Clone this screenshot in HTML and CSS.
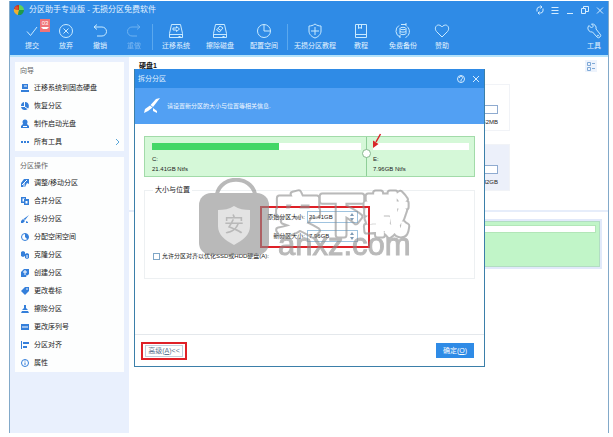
FILE: index.html
```html
<!DOCTYPE html>
<html lang="zh-CN">
<head>
    <meta charset="UTF-8">
    <meta name="viewport" content="width=device-width, initial-scale=1.0">
    <title>分区助手专业版 - 无损分区免费软件</title>
    <link rel="stylesheet" href="styles.css">
</head>
<body>
    <div class="app">
        <header class="titlebar">
            <svg class="logo" viewBox="0 0 12 12">
                <path d="M6 6V1A5 5 0 0 0 1 5.500Z" fill="#c8321e"/>
                <path d="M6 6L1 5A5 5 0 0 0 5 11Z" fill="#f0b030"/>
                <path d="M6 1a5 5 0 0 1 5 5L6 6.500Z" fill="#5fd35a"/>
                <path d="M11 6a5 5 0 0 1-6 5l1-5Z" fill="#1f9a4a"/>
                <circle cx="3.500" cy="4" r="1.800" fill="#e2502c"/>
            </svg>
            <h1>分区助手专业版 - 无损分区免费软件</h1>
            <div class="window-controls">
                <button aria-label="刷新"><svg viewBox="0 0 10 10"><path d="M2 6.500V4a2.500 2.500 0 0 1 2.500-2H7M5.500.500 7 2 5.500 3.500M8 3.500V6a2.500 2.500 0 0 1-2.500 2H3M4.500 6.500 3 8l1.500 1.500"/></svg></button>
                <button aria-label="菜单"><svg viewBox="0 0 10 10"><path d="M1.500 2.500h7M1.500 5.500h7M1.500 8.500h7"/></svg></button>
                <button aria-label="最小化"><svg viewBox="0 0 10 10"><path d="M2 8.500h6"/></svg></button>
                <button aria-label="还原"><svg viewBox="0 0 10 10"><path d="M1.500 3.500h4v5h-4zM3.500 3.500v-2h5v5h-3"/></svg></button>
                <button aria-label="关闭"><svg viewBox="0 0 10 10"><path d="M2 2.500l6 6M8 2.500l-6 6"/></svg></button>
            </div>
        </header>

        <nav class="toolbar">
            <button class="tool">
                <svg viewBox="0 0 16 16"><path d="M3 8.500l3.500 4L13 4"/></svg>
                <span>提交</span>
                <span class="badge">03</span>
            </button>
            <button class="tool">
                <svg viewBox="0 0 16 16"><circle cx="8" cy="8" r="6.500"/><path d="M5.500 5.500l5 5M10.500 5.500l-5 5"/></svg>
                <span>放弃</span>
            </button>
            <button class="tool">
                <svg viewBox="0 0 16 16"><path d="M5 1.500L2 4l3 2.500M2 4h8a4.500 4.500 0 0 1 0 9H5"/></svg>
                <span>撤销</span>
            </button>
            <button class="tool dim" disabled>
                <svg viewBox="0 0 16 16"><path d="M11 1.500L14 4l-3 2.500M14 4H6a4.500 4.500 0 0 0 0 9h5"/></svg>
                <span>重做</span>
            </button>
            <span class="divider"></span>
            <button class="tool wide">
                <svg viewBox="0 0 16 16"><path d="M3.500 1.500h9l2 9v4h-13v-4zM1.500 11.500h13M10.500 13.500h2M5 5h3.500V3.500L11.500 6 8.500 8.500V7H5z"/></svg>
                <span>迁移系统</span>
            </button>
            <button class="tool wide">
                <svg viewBox="0 0 16 16"><path d="M3.500 1.500h9l2 9v4h-13v-4zM1.500 11.500h13M10.500 13.500h2M8 3l3 2-3.500 4-3-2zM6 5.500l3 2"/></svg>
                <span>擦除磁盘</span>
            </button>
            <button class="tool wide">
                <svg viewBox="0 0 16 16"><circle cx="8" cy="8" r="6.500"/><path d="M8 1.500V8h6.500"/></svg>
                <span>配置空间</span>
            </button>
            <span class="divider"></span>
            <button class="tool wider">
                <svg viewBox="0 0 16 16"><path d="M8 1c2 1.500 4 2 6 2v5c0 3.500-3 6-6 7-3-1-6-3.500-6-7V3c2 0 4-.500 6-2zM8 4v8M4 8h8"/></svg>
                <span>无损分区教程</span>
            </button>
            <button class="tool medium">
                <svg viewBox="0 0 16 16"><path d="M2.500 1.500h11v13h-11zM2.500 11.500h11M5.500 1.500v4L7 4.500l1.500 1v-4"/></svg>
                <span>教程</span>
            </button>
            <button class="tool wide">
                <svg viewBox="0 0 16 16"><path d="M4 2.500a6.500 6.500 0 0 0 1 11.500M6 1.500h5M12 3.500a6.500 6.500 0 0 1-1.500 11M11 0v3M5 12v3"/><ellipse cx="8" cy="5.500" rx="3" ry="1.200"/><path d="M5 5.500v5c0 1.500 6 1.500 6 0v-5M5 8c0 1.500 6 1.500 6 0"/></svg>
                <span>免费备份</span>
            </button>
            <button class="tool">
                <svg viewBox="0 0 16 16"><path d="M8 14L2.500 8.500C0 5.500 2 2 4.500 2 6.500 2 8 4 8 4s1.500-2 3.500-2C14 2 16 5.500 13.500 8.500z"/></svg>
                <span>赞助</span>
            </button>
            <button class="tool tool-last">
                <svg viewBox="0 0 16 16"><path d="M3 2.500l2.500 2.500 2-2L5.500 1A4 4 0 0 1 10 6l4 5a2 2 0 0 1-3 3L6.500 9A4 4 0 0 1 2 4z"/><circle cx="12" cy="12.500" r=".5"/></svg>
                <span>工具</span>
            </button>
        </nav>

        <div class="workspace">
            <aside class="sidebar">
                <section class="panel">
                    <h2>向导</h2>
                    <ul>
                        <li><a href="#"><svg viewBox="0 0 10 10"><path d="M2 1h6v5H2zM1 7h8v2H1z"/><path d="M4 3h3" stroke="#fff"/></svg>迁移系统到固态硬盘</a></li>
                        <li><a href="#"><svg viewBox="0 0 10 10"><path d="M5 1a4 4 0 1 1-4 5h4zM4 1v4H1a4 4 0 0 1 3-4z"/><path d="M5 6l3 2" stroke="#fff"/></svg>恢复分区</a></li>
                        <li><a href="#"><svg viewBox="0 0 10 10"><circle cx="5" cy="3" r="2.500"/><path d="M3 5h4l2 2v2H1V7z"/><path d="M3 7.500h4" stroke="#fff"/></svg>制作启动光盘</a></li>
                        <li><a href="#"><svg viewBox="0 0 10 10"><path d="M1 4h2v2H1zM4 4h2v2H4zM7 4h2v2H7z"/></svg>所有工具<svg class="chevron" viewBox="0 0 6 8"><path d="M2 1l3 3-3 3"/></svg></a></li>
                    </ul>
                </section>
                <section class="panel">
                    <h2>分区操作</h2>
                    <ul>
                        <li><a href="#"><svg viewBox="0 0 10 10"><path d="M4 1h5v5L7 5 5 9H1V5z"/><path d="M2 7l5-5M4 9V5" stroke="#fff"/></svg>调整/移动分区</a></li>
                        <li><a href="#"><svg viewBox="0 0 10 10"><path d="M1 1h5v2h3v6H4V7H1zM2.500 2.500v3H4V3h1v-.500zM5.500 5v2.500h2V5z" fill-rule="evenodd"/></svg>合并分区</a></li>
                        <li><a href="#"><svg viewBox="0 0 10 10"><path d="M9 1L5 6 3.500 5zM3 5l2 2-2 2H1V7zM6 7l2 1v1H6z"/></svg>拆分分区</a></li>
                        <li><a href="#"><svg viewBox="0 0 10 10"><circle cx="5" cy="5" r="3.500" fill="none" stroke="#347fda"/><path d="M5 1.500V5l2.500 2.500A3.500 3.500 0 0 0 5 1.500z"/></svg>分配空闲空间</a></li>
                        <li><a href="#"><svg viewBox="0 0 10 10"><path d="M1 2l2-1 2 1v4L3 7 1 6z"/><path d="M5 4l2-1 2 1v4L7 9 5 8z"/><path d="M7 5v3" stroke="#fff"/></svg>克隆分区</a></li>
                        <li><a href="#"><svg viewBox="0 0 10 10"><path d="M4 1h5v5L6 9H1V4z"/><path d="M3 4h4M5 2v5M7 7v2" stroke="#fff"/></svg>创建分区</a></li>
                        <li><a href="#"><svg viewBox="0 0 10 10"><path d="M5 1h4v4L5 9 1 5z"/><circle cx="7" cy="3" r=".8" fill="#fff"/></svg>更改卷标</a></li>
                        <li><a href="#"><svg viewBox="0 0 10 10"><path d="M4 1h2v3l2 2H2l2-2zM2 7h6l1 2H1z"/></svg>擦除分区</a></li>
                        <li><a href="#"><svg viewBox="0 0 10 10"><path d="M1 2h8v6H1z"/><path d="M3 4v2M5 4v2M7 4v2" stroke="#fff"/></svg>更改序列号</a></li>
                        <li><a href="#"><svg viewBox="0 0 10 10"><path d="M1 1h1v8H1zM3 2h6v2H3zM3 6h4v2H3z"/></svg>分区对齐</a></li>
                        <li><a href="#"><svg viewBox="0 0 10 10"><circle cx="5" cy="5" r="3.500" fill="none" stroke="#347fda"/><path d="M4.500 4.500h1V7h-1zM4.500 2.500h1v1h-1z"/></svg>属性</a></li>
                    </ul>
                </section>
            </aside>

            <main class="disks">
                <div class="disk-list">
                    <div class="disk-head">
                        <h2>硬盘1</h2>
                        <button class="view-toggle" aria-label="视图"><svg viewBox="0 0 12 12"><path d="M2.500 2.500h3v3h-3zM2.500 7.500h3v3h-3zM7 3.500h3M7 8.500h3"/></svg></button>
                    </div>
                    <div class="volume">
                        <div class="volume-bar"></div>
                        <span>62MB</span>
                    </div>
                    <div class="volume selected">
                        <div class="volume-bar"></div>
                        <span>82GB</span>
                    </div>
                </div>
                <div class="disk-map">
                    <div class="map-block"><div class="map-bar"></div></div>
                </div>
            </main>
        </div>

        <div class="dialog" role="dialog" aria-labelledby="dialog-title">
            <div class="dialog-title">
                <h2 id="dialog-title">拆分分区</h2>
                <button aria-label="帮助"><svg viewBox="0 0 10 10"><circle cx="5" cy="5" r="3.500"/><path d="M3.500 4a1.500 1.500 0 1 1 2 1.200L5 6v1.500"/></svg></button>
                <button aria-label="关闭"><svg viewBox="0 0 10 10"><path d="M2 2l6 6M8 2L2 8"/></svg></button>
            </div>
            <div class="banner">
                <svg viewBox="0 0 16 16"><path d="M16 0L9 9 6.500 7 12 1zM6 7.500L8.500 9.500 4 13 0 15l1-4zM9 10l4 3v2l-4-2z" fill="#fff"/></svg>
                <p>请设置新分区的大小与位置等相关信息.</p>
            </div>

            <div class="dialog-body">
                <div class="split">
                    <div class="part part-c">
                        <div class="usage"><div class="used"></div></div>
                        <p>C:</p>
                        <p>21.41GB Ntfs</p>
                    </div>
                    <div class="part part-e">
                        <div class="usage"></div>
                        <p>E:</p>
                        <p>7.96GB Ntfs</p>
                    </div>
                    <span class="handle"></span>
                    <svg class="arrow" viewBox="0 0 10 16"><path d="M8.500 1L4 9" stroke="#d8262a" stroke-width="1.500"/><path d="M1 15V7.500L6.500 11z" fill="#d8262a"/></svg>
                </div>

                <fieldset class="sizes">
                    <legend>大小与位置</legend>
                    <div class="size-fields marked">
                        <label for="old-size">原始分区大小:</label>
                        <div class="spin">
                            <input id="old-size" type="text" value="21.41GB">
                            <svg viewBox="0 0 6 10"><path d="M1 4l2-3 2 3zM1 6l2 3 2-3z"/></svg>
                        </div>
                        <label for="new-size">新分区大小:</label>
                        <div class="spin">
                            <input id="new-size" type="text" value="7.96GB">
                            <svg viewBox="0 0 6 10"><path d="M1 4l2-3 2 3zM1 6l2 3 2-3z"/></svg>
                        </div>
                    </div>
                    <label class="check"><input type="checkbox">允许分区对齐以优化SSD或HDD硬盘(A):</label>
                </fieldset>
            </div>

            <div class="dialog-footer">
                <div class="marked advanced"><button>高级(<u>A</u>)&lt;&lt;</button></div>
                <button class="ok">确定(<u>O</u>)</button>
            </div>

            <svg class="watermark" viewBox="0 0 216 84">
                <defs>
                    <mask id="outline">
                        <g class="wm-name" stroke-linejoin="round">
                            <text x="77" y="53" fill="#fff" stroke="#fff" stroke-width="7">安下载</text>
                            <text x="77" y="53" fill="#000" stroke="#000" stroke-width="3">安下载</text>
                        </g>
                    </mask>
                </defs>
                <path d="M18 16C22-3 52-3 56 16" fill="none" stroke="#8c8c8c" stroke-width="4"/>
                <path d="M12 15h46a12 12 0 0 1 12 12v38a12 12 0 0 1-12 12H12A12 12 0 0 1 0 65V27a12 12 0 0 1 12-12z" fill="#8c8c8c"/>
                <path d="M35 28c5 3 10 4 16 4v16c0 9-7 14-16 19-9-5-16-10-16-19V32c6 0 11-1 16-4z" fill="#d2d2d2"/>
                <text class="wm-badge" x="35" y="54">安</text>
                <rect x="70" y="6" width="146" height="60" fill="#8c8c8c" mask="url(#outline)"/>
                <text class="wm-site" x="79" y="77">anxz.com</text>
            </svg>
        </div>
    </div>
</body>
</html>
```
FILE: styles.css
```css
* {
    margin: 0;
    padding: 0;
    box-sizing: border-box;
}

body {
    min-height: 100vh;
    display: flex;
    padding: 1px 4px 4px 9px;
    background: #fff;
    color: #222;
    font-family: "Liberation Sans", "Noto Sans CJK SC", sans-serif;
    font-size: 7px;
    line-height: 10px;
}

button, input {
    font: inherit;
    color: inherit;
    background: none;
    border: none;
}

svg {
    display: block;
    flex: none;
}

h1, h2 {
    font-size: 7px;
    font-weight: normal;
}

ul {
    list-style: none;
}

a {
    color: inherit;
    text-decoration: none;
}

.app {
    position: relative;
    flex: 1;
    display: flex;
    flex-direction: column;
    border: 1px solid #82a9c9;
    border-top: none;
    border-bottom: none;
}

/* title bar and toolbar */
.titlebar {
    display: flex;
    align-items: center;
    gap: 4px;
    height: 18px;
    padding: 0 3px;
    background: #2f8be6;
    color: #e4f3ff;
}

.titlebar h1 {
    flex: 1;
    font-size: 8px;
}

.logo {
    width: 12px;
    height: 12px;
}

.window-controls {
    display: flex;
    gap: 5px;
}

.window-controls svg,
.dialog-title svg {
    width: 10px;
    height: 10px;
    fill: none;
    stroke: #d4ecff;
    stroke-width: 1;
}

.toolbar {
    display: flex;
    align-items: center;
    height: 38px;
    padding-left: 5px;
    background: #2f8be6;
    border-bottom: 2px solid #b5e3fb;
    color: #e4f3ff;
}

.tool {
    position: relative;
    display: flex;
    flex-direction: column;
    align-items: center;
    gap: 2px;
    width: 34px;
    white-space: nowrap;
}

.tool svg {
    width: 16px;
    height: 16px;
    fill: none;
    stroke: #c9eaff;
    stroke-width: 1;
}

.tool.medium {
    width: 40px;
}

.tool.wide {
    width: 44px;
}

.tool.wider {
    width: 52px;
}

.tool-last {
    width: 28px;
    margin-left: auto;
}

.tool.dim {
    opacity: 0.4;
}

.divider {
    width: 1px;
    height: 26px;
    margin: 0 1px;
    background: #5ba8ee;
}

.badge {
    position: absolute;
    top: -4px;
    right: -1px;
    width: 10px;
    height: 13px;
    background: #f07478;
    color: #fff;
    font-size: 6px;
    line-height: 8px;
}

.badge::after {
    content: "";
    display: block;
    width: 4px;
    margin: 0 auto;
    border: 2px solid transparent;
    border-top-color: #fff;
}

/* sidebar */
.workspace {
    flex: 1;
    display: flex;
}

.sidebar {
    width: 119px;
    padding: 5px 5px 0;
    background: #e9f0fd;
}

.panel {
    margin-bottom: 6px;
    background: #fdfefe;
}

.panel h2 {
    height: 17px;
    padding-left: 5px;
    line-height: 17px;
    color: #666;
}

.panel a {
    display: flex;
    align-items: center;
    gap: 4px;
    height: 18px;
    padding: 0 4px 0 5px;
}

.panel svg {
    width: 10px;
    height: 10px;
    fill: #347fda;
}

.panel .chevron {
    width: 6px;
    height: 8px;
    margin-left: auto;
    fill: none;
    stroke: #5aa6d8;
}

/* disk area behind the dialog */
.disks {
    flex: 1;
}

.disk-list {
    height: 155px;
    border-bottom: 2px solid #e6edfa;
}

.disk-head {
    display: flex;
    align-items: center;
    justify-content: space-between;
    height: 17px;
    padding: 0 11px 0 10px;
}

.disk-head h2 {
    font-weight: bold;
    color: #111;
}

.view-toggle {
    background: #edf3fc;
}

.view-toggle svg {
    width: 12px;
    height: 12px;
    fill: none;
    stroke: #7fa9d6;
}

.volume {
    width: 140px;
    height: 47px;
    margin: 10px 98px 13px auto;
    padding: 20px 11px 0;
    border: 1px solid #f1f3f7;
    font-size: 6px;
    text-align: right;
}

.volume.selected {
    background: #ecf0fa;
}

.volume-bar {
    height: 9px;
    margin-bottom: 3px;
    background: #fff;
    border: 1px solid #8fabd0;
}

.disk-map {
    padding: 7px 6px 0 100px;
}

.map-block {
    height: 50px;
    padding: 3px;
    background: #c1f5c8;
    border: 3px solid #e1e9fa;
    outline-offset: -3px;
    outline: 1px solid #b2ddc3;
}

.map-bar {
    height: 8px;
    background: #fff;
    border: 1px solid #b2e6b8;
}

/* split dialog */
.dialog {
    position: absolute;
    left: 124px;
    top: 68px;
    width: 351px;
    background: #fff;
    border: 1px solid #3b7fa9;
    border-top: none;
}

.dialog-title {
    display: flex;
    align-items: center;
    gap: 5px;
    height: 19px;
    padding: 0 3px;
    background: #2f8be6;
    color: #e4f3ff;
}

.dialog-title h2 {
    flex: 1;
}

.banner {
    display: flex;
    align-items: center;
    gap: 7px;
    height: 36px;
    padding-left: 9px;
    background: #52a0f3;
    color: #f2f9ff;
    font-size: 6px;
}

.banner svg {
    width: 16px;
    height: 16px;
}

.dialog-body {
    padding: 12px 9px 0;
}

.split {
    position: relative;
    display: flex;
    height: 41px;
    background: #d5f8d8;
    border: 1px solid #a2dba9;
    font-size: 6px;
}

.part {
    padding: 6px 5px 0 7px;
}

.part-c {
    width: 222px;
    border-right: 1px solid #8fcf98;
}

.part-e {
    flex: 1;
    padding-left: 6px;
}

.usage {
    height: 7px;
    margin-bottom: 4px;
    background: #fff;
}

.used {
    width: 61%;
    height: 100%;
    background: #42d766;
}

.handle {
    position: absolute;
    left: 217px;
    top: 12px;
    width: 9px;
    height: 9px;
    background: #fff;
    border: 1px solid #85b78c;
    border-radius: 50%;
}

.arrow {
    position: absolute;
    left: 227px;
    top: -4px;
    width: 10px;
    height: 16px;
}

.sizes {
    margin-top: 8px;
    padding: 11px 8px 17px;
    border: 1px solid #edf0f2;
}

.sizes legend {
    padding: 0 2px;
}

.marked {
    border: 2px solid #df2027;
}

.size-fields {
    display: grid;
    grid-template-columns: 43px 51px;
    gap: 7px 2px;
    width: 110px;
    margin-left: 107px;
    padding: 3px 0 4px;
    font-size: 6px;
}

.size-fields label {
    line-height: 12px;
    text-align: right;
    white-space: nowrap;
}

.spin {
    display: flex;
    align-items: center;
    height: 12px;
    border: 1px solid #9fc3df;
}

.spin input {
    flex: 1;
    width: 20px;
    padding-left: 1px;
}

.spin svg {
    width: 6px;
    height: 10px;
    margin-right: 2px;
    fill: #7f9bb5;
}

.check {
    display: flex;
    align-items: center;
    gap: 2px;
    margin-top: 3px;
    font-size: 6px;
}

.check input {
    appearance: none;
    width: 7px;
    height: 7px;
    background: #fff;
    border: 1px solid #7fa6c6;
}

.dialog-footer {
    display: flex;
    align-items: center;
    justify-content: space-between;
    height: 32px;
    margin-top: 55px;
    padding: 0 10px 0 6px;
    border-top: 1px solid #e4e8ec;
}

.advanced {
    padding: 1px 2px;
}

.advanced button {
    width: 38px;
    height: 12px;
    border: 1px solid #c3cedb;
    color: #5f7893;
}

.ok {
    width: 38px;
    height: 15px;
    background: #2f8be6;
    color: #fff;
}

.watermark {
    position: absolute;
    left: 64px;
    top: 109px;
    width: 216px;
    height: 84px;
    opacity: 0.6;
    pointer-events: none;
}

.wm-name {
    font-size: 44px;
    font-weight: bold;
}

.wm-badge {
    font-size: 20px;
    text-anchor: middle;
    fill: #8c8c8c;
}

.wm-site {
    font-size: 31px;
    fill: #8c8c8c;
    stroke: #8c8c8c;
    stroke-width: 1px;
}
```
